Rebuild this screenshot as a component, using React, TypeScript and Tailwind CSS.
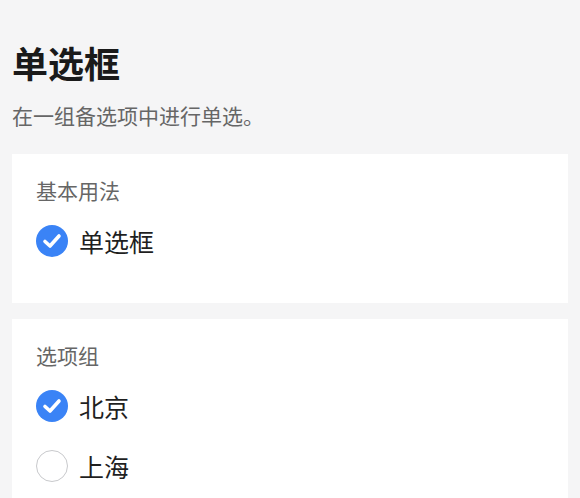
import { useState } from "react"

const font = { fontFamily: '"Noto Sans CJK SC", "Noto Sans", sans-serif' }

function RadioIcon({ checked }: { checked: boolean }) {
  if (!checked) {
    return <span className="block h-8 w-8 shrink-0 rounded-full border border-[#c8c9cc] bg-white" />
  }
  return (
    <svg width="32" height="32" viewBox="0 0 32 32" className="shrink-0">
      <circle cx="16" cy="16" r="16" fill="#3a83f6" />
      <path
        d="M9 16.5 L14 21 L23 11"
        fill="none"
        stroke="#fff"
        strokeWidth="3.6"
        strokeLinecap="round"
        strokeLinejoin="round"
      />
    </svg>
  )
}

function Radio({ label, checked, onClick }: { label: string; checked: boolean; onClick?: () => void }) {
  return (
    <div className="flex h-[60px] cursor-pointer items-center gap-[11px]" onClick={onClick}>
      <RadioIcon checked={checked} />
      <span className="text-[25px] leading-8 text-[#1f1f1f]">{label}</span>
    </div>
  )
}

function Card({ title, children, className = "" }: { title: string; children: React.ReactNode; className?: string }) {
  return (
    <section className={`mx-3 bg-white px-6 pt-[22px] ${className}`}>
      <h2 className="text-[21px] leading-7 text-[#666]">{title}</h2>
      <div className="mt-[7px]">{children}</div>
    </section>
  )
}

export default function App() {
  const [city, setCity] = useState("北京")

  return (
    <div className="min-h-[498px] bg-[#f5f5f6]" style={font}>
      <header className="px-3 pt-[38px]">
        <h1 className="text-[36px] font-bold leading-[49px] text-[#1a1a1a]">单选框</h1>
        <p className="mt-[14px] text-[21px] leading-7 text-[#666]">在一组备选项中进行单选。</p>
      </header>

      <Card title="基本用法" className="mt-[25px] pb-8">
        <Radio label="单选框" checked />
      </Card>

      <Card title="选项组" className="mt-4 pb-4">
        {["北京", "上海"].map((c) => (
          <Radio key={c} label={c} checked={city === c} onClick={() => setCity(c)} />
        ))}
      </Card>
    </div>
  )
}
